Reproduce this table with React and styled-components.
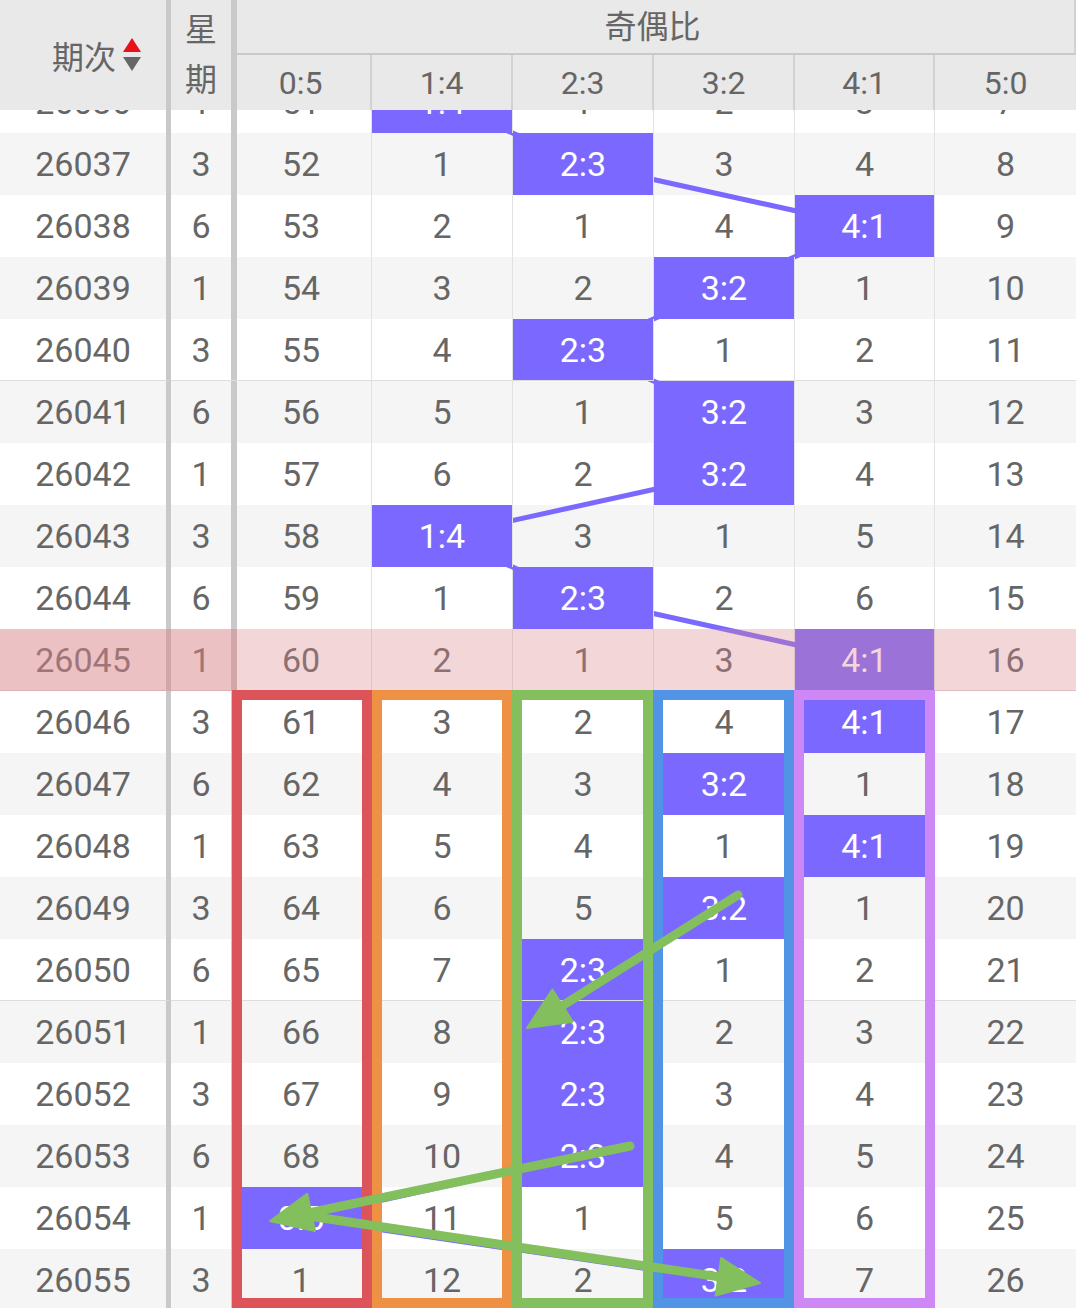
import React from 'react';
import styled, { createGlobalStyle, css } from 'styled-components';

const GlobalStyle = createGlobalStyle`
  html, body { margin: 0; padding: 0; background: #fff; }
  body { font-family: Roboto, "Noto Sans", "Noto Sans CJK SC", sans-serif; }
`;

const COLS = '171px 60px 141px 141px 141px 141px 140px 141px';
const RATIOS = ['0:5', '1:4', '2:3', '3:2', '4:1', '5:0'];
const CENTERS = [301, 442, 583, 724, 864.5, 1005];
const ROW_H = 62;
const BODY_TOP = 71;
const PURPLE = '#7b69ff';
const DIV = '#c9c9c9';
const GREEN = '#84bf5e';

const rows = [
  { p: 26036, w: 1, v: [51, 0, 1, 2, 3, 7], h: 1 },
  { p: 26037, w: 3, v: [52, 1, 0, 3, 4, 8], h: 2 },
  { p: 26038, w: 6, v: [53, 2, 1, 4, 0, 9], h: 4 },
  { p: 26039, w: 1, v: [54, 3, 2, 0, 1, 10], h: 3 },
  { p: 26040, w: 3, v: [55, 4, 0, 1, 2, 11], h: 2 },
  { p: 26041, w: 6, v: [56, 5, 1, 0, 3, 12], h: 3 },
  { p: 26042, w: 1, v: [57, 6, 2, 0, 4, 13], h: 3 },
  { p: 26043, w: 3, v: [58, 0, 3, 1, 5, 14], h: 1 },
  { p: 26044, w: 6, v: [59, 1, 0, 2, 6, 15], h: 2 },
  { p: 26045, w: 1, v: [60, 2, 1, 3, 0, 16], h: 4, marked: true },
  { p: 26046, w: 3, v: [61, 3, 2, 4, 0, 17], h: 4 },
  { p: 26047, w: 6, v: [62, 4, 3, 0, 1, 18], h: 3 },
  { p: 26048, w: 1, v: [63, 5, 4, 1, 0, 19], h: 4 },
  { p: 26049, w: 3, v: [64, 6, 5, 0, 1, 20], h: 3 },
  { p: 26050, w: 6, v: [65, 7, 0, 1, 2, 21], h: 2 },
  { p: 26051, w: 1, v: [66, 8, 0, 2, 3, 22], h: 2 },
  { p: 26052, w: 3, v: [67, 9, 0, 3, 4, 23], h: 2 },
  { p: 26053, w: 6, v: [68, 10, 0, 4, 5, 24], h: 2 },
  { p: 26054, w: 1, v: [0, 11, 1, 5, 6, 25], h: 0 },
  { p: 26055, w: 3, v: [1, 12, 2, 0, 7, 26], h: 3 },
];

const BODY_H = rows.length * ROW_H;

const Page = styled.div`
  width: 1076px;
  height: 1308px;
  overflow: hidden;
  background: #fff;
`;

const Header = styled.div`
  display: grid;
  grid-template-columns: ${COLS};
  grid-template-rows: 55px 55px;
  background: #e9e9e9;
  color: #666;
  position: relative;
  z-index: 5;
  margin-bottom: -39px;
`;

const PeriodHead = styled.div`
  grid-row: 1 / 3;
  border-right: 5px solid ${DIV};
  display: flex;
  align-items: center;
  justify-content: center;
  gap: 7px;
  padding-left: 27px;
  font-size: 32px;
`;

const WeekHead = styled.div`
  grid-row: 1 / 3;
  display: flex;
  flex-direction: column;
  align-items: center;
  justify-content: center;
  font-size: 32px;
  line-height: 50px;
`;

const GroupHead = styled.div`
  grid-column: 3 / 9;
  display: flex;
  align-items: center;
  justify-content: center;
  font-size: 32px;
  border-bottom: 2px solid ${DIV};
  border-right: 2px solid #d2d2d2;
  box-shadow: inset 6px 0 0 ${DIV};
  padding-bottom: 6px;
`;

const SubHead = styled.div`
  display: flex;
  align-items: center;
  justify-content: center;
  font-size: 32px;
  border-right: ${p => (p.$last ? 'none' : '2px solid #d2d2d2')};
  ${p => p.$first && css`box-shadow: inset 6px 0 0 ${DIV};`}
`;

const Body = styled.div`
  position: relative;
  z-index: 0;
`;

const Row = styled.div`
  display: grid;
  grid-template-columns: ${COLS};
  height: ${ROW_H}px;
  background: ${p => (p.$alt && !p.$marked ? '#f5f5f5' : '#fff')};
  ${p => p.$marked && css`
    position: relative;
    &::after {
      content: '';
      position: absolute;
      inset: 0;
      z-index: 3;
      pointer-events: none;
      background: linear-gradient(to right, rgba(217, 132, 139, 0.5) 0 237px, rgba(217, 132, 139, 0.335) 237px);
    }
  `}
`;

const Cell = styled.div`
  box-sizing: border-box;
  height: ${ROW_H}px;
  display: flex;
  align-items: center;
  justify-content: center;
  font-size: 34px;
  color: #666;
  border-bottom: ${p => (p.$groupEnd ? '1px solid #dddddd' : 'none')};
`;

const PeriodCell = styled(Cell)`
  border-right: 5px solid ${DIV};
`;

const WeekCell = styled(Cell)``;

const RatioCell = styled(Cell)`
  border-right: ${p => (p.$last ? 'none' : '1px solid #e2e2e2')};
  ${p => p.$first && css`box-shadow: inset 6px 0 0 ${DIV};`}
  ${p => p.$hit && css`
    background: ${PURPLE};
    color: #fff;
    position: relative;
    z-index: 2;
  `}
`;

const Overlay = styled.svg`
  position: absolute;
  left: 0;
  top: 0;
  width: 1076px;
  height: ${BODY_H}px;
  z-index: ${p => p.$z};
  pointer-events: none;
`;

function SortIcon() {
  return (
    <svg width="18" height="34" viewBox="0 0 18 34">
      <polygon points="9,0 18,14 0,14" fill="#e8111a" />
      <polygon points="0,19 18,19 9,33" fill="#666" />
    </svg>
  );
}

function arrowParts(x1, y1, x2, y2) {
  const L = 42;
  const W = 19;
  const dx = x2 - x1;
  const dy = y2 - y1;
  const len = Math.hypot(dx, dy);
  const ux = dx / len;
  const uy = dy / len;
  const bx = x2 - ux * L;
  const by = y2 - uy * L;
  const px = -uy;
  const py = ux;
  return {
    line: [x1, y1, bx + ux * 4, by + uy * 4],
    head: `${x2},${y2} ${bx + px * W},${by + py * W} ${bx - px * W},${by - py * W}`,
  };
}

const ARROWS = [
  [738, 895, 527, 1028],
  [630, 1146, 270, 1221],
  [302, 1215, 760, 1283],
];

const BOXES = [
  { x: 232, w: 140, c: '#dc535a' },
  { x: 372, w: 140, c: '#ee9145' },
  { x: 512, w: 141, c: GREEN },
  { x: 653, w: 141, c: '#5194e6' },
  { x: 794, w: 141, c: '#cd88f6' },
];

export default function App() {
  const cy = i => BODY_TOP + i * ROW_H + ROW_H / 2;
  const pts = rows.map((r, i) => `${CENTERS[r.h]},${cy(i)}`).join(' ');
  const viewBox = `0 ${BODY_TOP} 1076 ${BODY_H}`;

  return (
    <Page>
      <GlobalStyle />
      <Header>
        <PeriodHead>
          <span>期次</span>
          <SortIcon />
        </PeriodHead>
        <WeekHead>
          <span>星</span>
          <span>期</span>
        </WeekHead>
        <GroupHead>奇偶比</GroupHead>
        {RATIOS.map((r, i) => (
          <SubHead key={r} $first={i === 0} $last={i === RATIOS.length - 1}>
            {r}
          </SubHead>
        ))}
      </Header>
      <Body>
        <Overlay $z={1} viewBox={viewBox}>
          <polyline points={pts} fill="none" stroke={PURPLE} strokeWidth="5" strokeLinejoin="round" />
        </Overlay>
        {rows.map((r, i) => {
          const groupEnd = r.p % 5 === 0;
          return (
            <Row key={r.p} $alt={i % 2 === 1} $marked={r.marked}>
              <PeriodCell $groupEnd={groupEnd}>{r.p}</PeriodCell>
              <WeekCell $groupEnd={groupEnd}>{r.w}</WeekCell>
              {r.v.map((val, j) => (
                <RatioCell
                  key={j}
                  $first={j === 0}
                  $last={j === 5}
                  $hit={j === r.h}
                  $groupEnd={groupEnd}
                >
                  {j === r.h ? RATIOS[j] : val}
                </RatioCell>
              ))}
            </Row>
          );
        })}
        <Overlay $z={4} viewBox={viewBox}>
          {BOXES.map(b => (
            <rect
              key={b.x}
              x={b.x + 5}
              y={695}
              width={b.w - 10}
              height={608}
              fill="none"
              stroke={b.c}
              strokeWidth="10"
            />
          ))}
          {ARROWS.map((a, i) => {
            const p = arrowParts(...a);
            return (
              <g key={i} fill={GREEN} stroke={GREEN}>
                <line
                  x1={p.line[0]}
                  y1={p.line[1]}
                  x2={p.line[2]}
                  y2={p.line[3]}
                  strokeWidth="9"
                  strokeLinecap="round"
                />
                <polygon points={p.head} strokeWidth="2" strokeLinejoin="round" />
              </g>
            );
          })}
        </Overlay>
      </Body>
    </Page>
  );
}
